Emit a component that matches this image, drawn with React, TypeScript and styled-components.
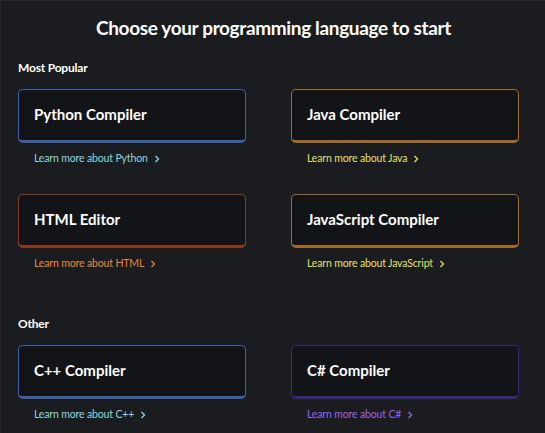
import React from "react";
import styled, { createGlobalStyle } from "styled-components";

const Global = createGlobalStyle`
  html, body { margin: 0; padding: 0; background: #1b1c20; }
  body { font-family: Lato, "Open Sans", sans-serif; }
  * { box-sizing: border-box; }
`;

const Page = styled.div`
  width: 545px;
  height: 433px;
  background: #1b1c20;
  border-top: 1px solid #2a2b31;
  border-left: 1px solid #26272d;
  padding: 0 26px 0 17px;
  overflow: hidden;
`;

const Title = styled.h1`
  margin: 13px 0 0;
  padding-left: 10px;
  text-align: center;
  color: #ffffff;
  font-size: 19px;
  font-weight: 700;
  line-height: 28px;
  letter-spacing: -0.35px;
`;

const SectionTitle = styled.h2`
  margin: 0;
  color: #ffffff;
  font-size: 12px;
  font-weight: 700;
  line-height: 18px;
  letter-spacing: -0.2px;
`;

const Section = styled.section<{ $top: number }>`
  margin-top: ${(p) => p.$top}px;
`;

const Grid = styled.div`
  display: grid;
  grid-template-columns: 228px 228px;
  column-gap: 45px;
  row-gap: 28px;
  margin-top: 12px;
`;

const Item = styled.div`
  display: flex;
  flex-direction: column;
`;

const Card = styled.div<{ $border: string }>`
  height: 54px;
  background: #131417;
  border: 1px solid ${(p) => p.$border};
  border-bottom-width: 3px;
  border-radius: 5px;
  display: flex;
  align-items: center;
  padding: 0 15px 2px;
  color: #ffffff;
  font-size: 15px;
  font-weight: 700;
`;

const Link = styled.a<{ $color: string }>`
  display: flex;
  align-items: center;
  gap: 6px;
  margin-top: 8px;
  padding-left: 16px;
  color: ${(p) => p.$color};
  font-size: 10.5px;
  line-height: 15px;
  letter-spacing: -0.15px;
  text-decoration: none;
`;

const Chevron = () => (
  <svg width="6" height="8" viewBox="0 0 6 8" fill="none">
    <path d="M1.5 1 L4.5 4 L1.5 7" stroke="currentColor" strokeWidth="1.3" />
  </svg>
);

type Lang = { name: string; label: string; border: string; link: string };

const popular: Lang[] = [
  { name: "Python Compiler", label: "Python", border: "#3f5fa6", link: "#8fd8dd" },
  { name: "Java Compiler", label: "Java", border: "#a06a2c", link: "#e3e06a" },
  { name: "HTML Editor", label: "HTML", border: "#8b3a20", link: "#e8873e" },
  { name: "JavaScript Compiler", label: "JavaScript", border: "#a06a2c", link: "#e3e06a" },
];

const other: Lang[] = [
  { name: "C++ Compiler", label: "C++", border: "#3f5fa6", link: "#8fd8dd" },
  { name: "C# Compiler", label: "C#", border: "#3a2878", link: "#9b63ef" },
];

const LangItem = ({ l }: { l: Lang }) => (
  <Item>
    <Card $border={l.border}>{l.name}</Card>
    <Link $color={l.link} href="#">
      Learn more about {l.label}
      <Chevron />
    </Link>
  </Item>
);

export default function App() {
  return (
    <>
      <Global />
      <Page>
        <Title>Choose your programming language to start</Title>
        <Section $top={17}>
          <SectionTitle>Most Popular</SectionTitle>
          <Grid>
            {popular.map((l) => (
              <LangItem key={l.name} l={l} />
            ))}
          </Grid>
        </Section>
        <Section $top={44}>
          <SectionTitle>Other</SectionTitle>
          <Grid>
            {other.map((l) => (
              <LangItem key={l.name} l={l} />
            ))}
          </Grid>
        </Section>
      </Page>
    </>
  );
}
